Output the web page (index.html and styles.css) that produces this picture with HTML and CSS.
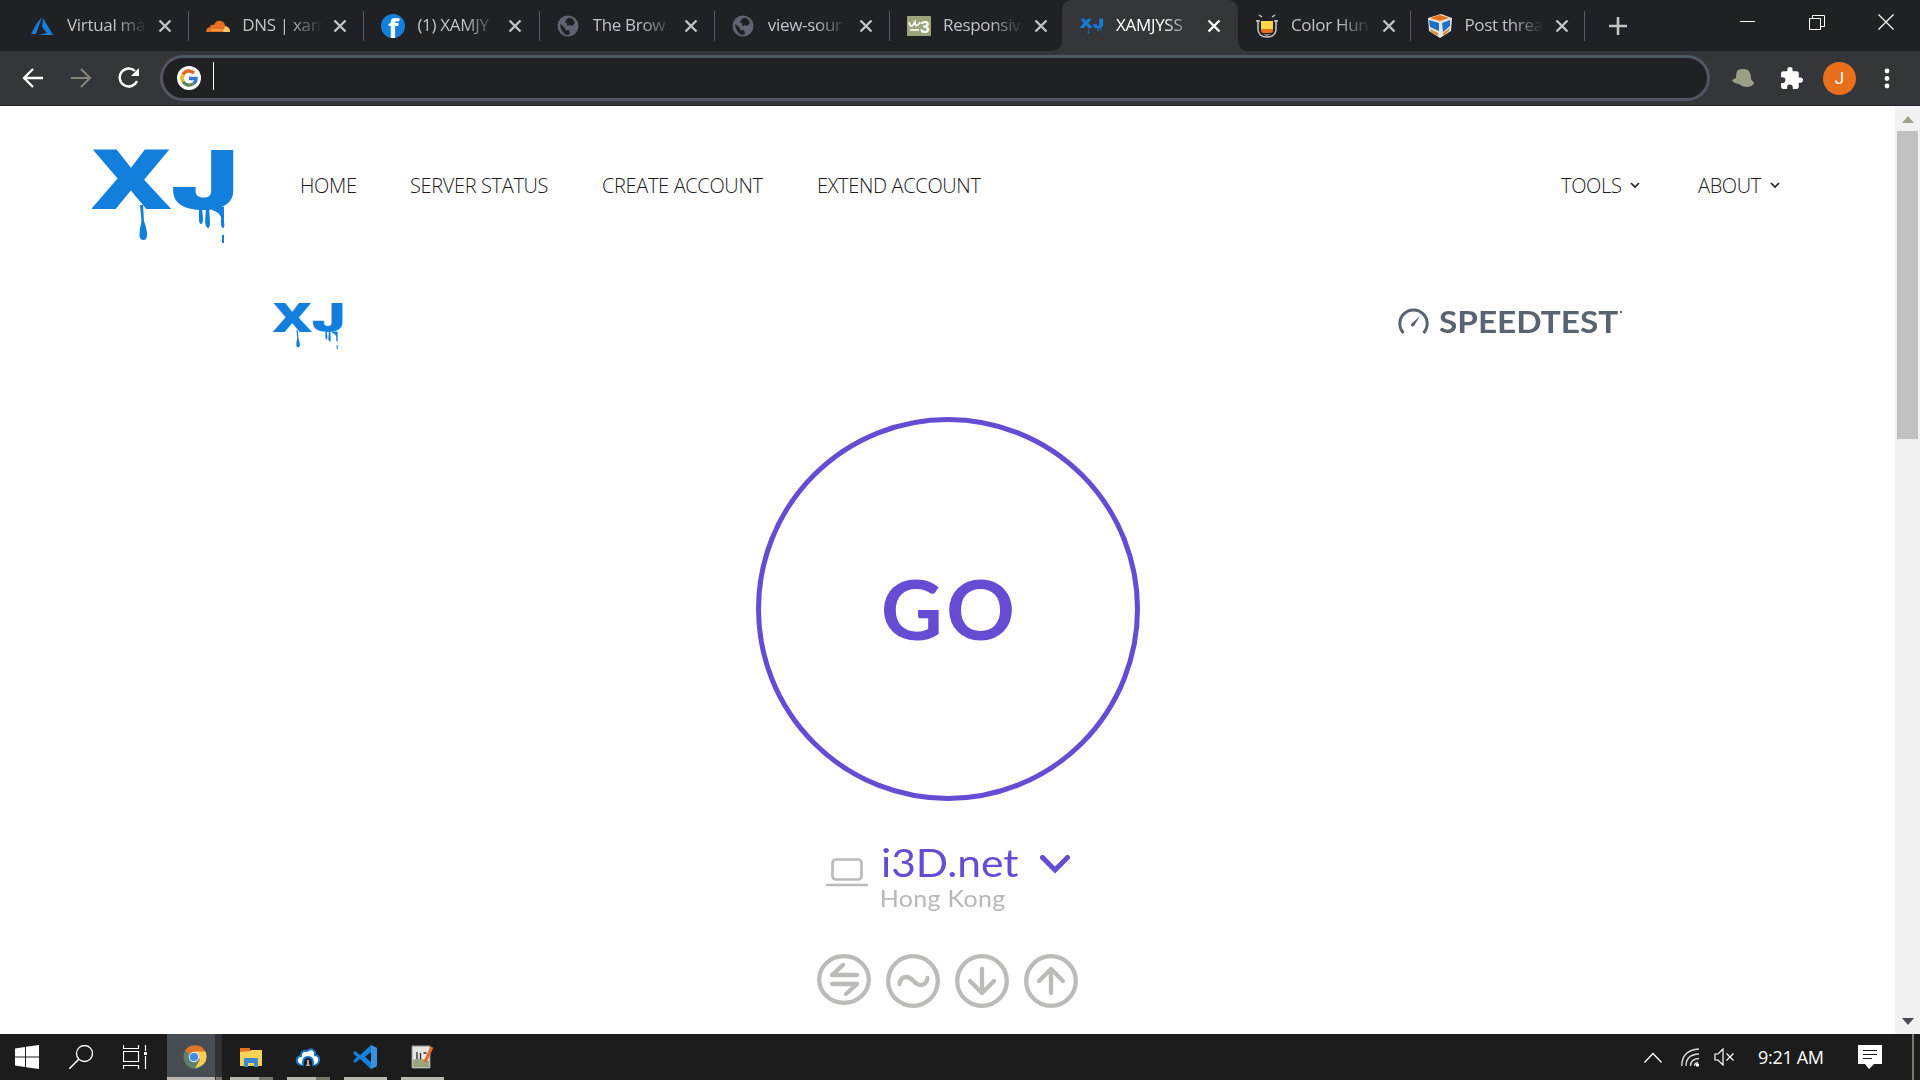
FILE: index.html
```html
<!DOCTYPE html>
<html lang="en">
<head>
    <meta charset="UTF-8">
    <title>XAMJYSSVPN</title>
    <link rel="stylesheet" href="styles.css">
</head>
<body>
    <svg class="defs" width="0" height="0">
        <symbol id="close" viewBox="0 0 14 14"><path d="M1.5 1.5l11 11M12.5 1.5l-11 11" stroke="currentColor" stroke-width="2.4"/></symbol>
        <symbol id="logo" viewBox="0 0 147 94">
            <text class="logo-letter" transform="translate(-1 59.500) scale(1.350 1)" font-size="82.500">X</text>
            <text class="logo-letter j" transform="translate(79 59.500) scale(1.400 1)" font-size="81">J</text>
            <g fill="#127fdd">
                <path d="M48 56h3l1 16q3 8 3 14 0 5-3.500 5-4 0-4-5 0-6 2-14z"/>
                <path d="M107 58h3l1 12q0 5-2 5t-2-5zM114 58h3l1 15q0 6-2 6t-3-6zM120 58h12v15q1 6-1 6t-2-6v-5q-2-5-9-7zM130 86h2v8h-2z"/>
            </g>
        </symbol>
        <symbol id="globe" viewBox="0 0 22 22"><circle cx="11" cy="11" r="10.500" fill="#5f6571"/><path d="M3 9q5 3 5 5t4 1l1 4-3 1Q4 18 3 9zM11 3q5-1 7 5l-3 3-2-1-3 1V8H8l1-3z" fill="#202124"/></symbol>
        <symbol id="down" viewBox="0 0 10 7"><path d="M1 1l4 4 4-4" fill="none" stroke="#222" stroke-width="1.700"/></symbol>
    </svg>

    <header class="tabs">
        <div class="tab">
            <svg class="favicon" viewBox="0 0 24 24"><path d="M11 3L6 9 0 20h5zM12 4l10 17H7l9-2-5-6z" fill="#1580dc"/></svg>
            <span class="title">Virtual ma</span><svg class="close"><use href="#close"/></svg>
        </div>
        <div class="tab">
            <svg class="favicon" viewBox="0 0 24 24"><path d="M0 18q0-4 4-5 0-3 4-2 2-5 7-4 4 1 4 5 5 1 5 6z" fill="#e86f21"/><path d="M17 18l2-6q5 1 5 6z" fill="#f9c66b"/><path d="M5 16h13" stroke="#f9c66b"/></svg>
            <span class="title">DNS | xam</span><svg class="close"><use href="#close"/></svg>
        </div>
        <div class="tab">
            <svg class="favicon" viewBox="0 0 24 24"><circle cx="12" cy="12" r="12" fill="#1580dc"/><text x="7" y="24" font-size="27" font-weight="bold" fill="#fff" font-family="Open Sans">f</text></svg>
            <span class="title">(1) XAMJY</span><svg class="close"><use href="#close"/></svg>
        </div>
        <div class="tab">
            <svg class="favicon small"><use href="#globe"/></svg>
            <span class="title">The Brow</span><svg class="close"><use href="#close"/></svg>
        </div>
        <div class="tab">
            <svg class="favicon small"><use href="#globe"/></svg>
            <span class="title">view-sour</span><svg class="close"><use href="#close"/></svg>
        </div>
        <div class="tab before-active">
            <svg class="favicon" viewBox="0 0 24 24"><rect y="2" width="24" height="20" rx="1" fill="#9ba57c"/><path d="M2 8q1 6 4 3l2-3q0 6 4 2l1-2M3 16h9" fill="none" stroke="#fff" stroke-width="1.600"/><text x="13" y="18.500" font-size="17" font-weight="bold" fill="#fff" font-family="Roboto">3</text></svg>
            <span class="title">Responsiv</span><svg class="close"><use href="#close"/></svg>
        </div>
        <div class="tab active">
            <svg class="favicon" viewBox="0 0 147 110"><use href="#logo" width="147" height="94" y="10"/></svg>
            <span class="title">XAMJYSS</span><svg class="close"><use href="#close"/></svg>
        </div>
        <div class="tab last">
            <svg class="favicon" viewBox="0 0 24 24"><path d="M3 6v10q1 7 9 7t9-7V6M4 1l3 2M20 1l-3 2M1 7h4M19 7h4" fill="none" stroke="#c9c9c9" stroke-width="1.500"/><path d="M6 7h12v8H6z" fill="#fdd545"/><path d="M6 15h12v3l-2 1H8l-2-1z" fill="#e8701d"/><path d="M8 20h8l-3 2h-2z" fill="#8b7e87"/></svg>
            <span class="title">Color Hun</span><svg class="close"><use href="#close"/></svg>
        </div>
        <div class="tab last">
            <svg class="favicon" viewBox="0 0 24 24"><path d="M0 4l13-4 11 4-1 13-11 7L1 17z" fill="#e4e4dd"/><path d="M2 4l10-3 9 3-9 3z" fill="#e8701d"/><path d="M1 6l10 3v8L2 13zM14 9l8-3v6l-7 6z" fill="#1b73c8"/><path d="M2 15l8 4v3l-7-4zM15 19l7-5-1 3-6 5z" fill="#d78b45"/></svg>
            <span class="title">Post threa</span><svg class="close"><use href="#close"/></svg>
        </div>
        <svg class="new-tab" viewBox="0 0 18 18"><path d="M9 0v18M0 9h18" stroke="#c4c4c4" stroke-width="2.600"/></svg>
        <div class="window-buttons">
            <svg viewBox="0 0 16 16"><path d="M0 7.500h15" stroke="#fff"/></svg>
            <svg viewBox="0 0 16 16"><path d="M.5 4.500h11v11H.5zM3.500 4V1.500h12v11H12" fill="none" stroke="#fff"/></svg>
            <svg viewBox="0 0 16 16"><path d="M.5 .5l15 15M15.500 .5l-15 15" stroke="#fff" stroke-width="1.200"/></svg>
        </div>
    </header>

    <div class="toolbar">
        <svg class="tool" viewBox="0 0 22 22"><path d="M21 11H2M11 2l-9 9 9 9" fill="none" stroke="#fff" stroke-width="2.300"/></svg>
        <svg class="tool" viewBox="0 0 22 22"><path d="M1 11h19M11 2l9 9-9 9" fill="none" stroke="#86857c" stroke-width="2"/></svg>
        <svg class="tool" viewBox="0 0 22 22"><path d="M19 14a9 9 0 1 1-2-10" fill="none" stroke="#fff" stroke-width="2.400"/><path d="M21 1v8h-8z" fill="#fff"/></svg>
        <div class="omnibox">
            <svg class="google" viewBox="0 0 24 24">
                <circle cx="12" cy="12" r="12" fill="#fff"/>
                <g fill="none" stroke-width="3.500">
                    <path d="M17 7A7 7 0 0 0 6 8.500" stroke="#e36524"/>
                    <path d="M6 8.500a7 7 0 0 0 0 7" stroke="#f0b929"/>
                    <path d="M6 15.500a7 7 0 0 0 10.500 2" stroke="#5f8755"/>
                    <path d="M12 12.500h7q0 3.500-2.500 5" stroke="#3478cc"/>
                </g>
            </svg>
            <span class="cursor"></span>
        </div>
        <div class="extensions">
            <svg width="22" height="18" viewBox="0 0 22 18"><path d="M4 9Q4 3 6 1q5-2 10 0 3 3 3 9l3 4q-1 4-8 4-4 0-7-3-6-1-7-4z" fill="#9b9f85"/></svg>
            <svg width="25" height="25" viewBox="0 0 24 24"><path d="M20.500 11H19V7c0-1.100-.9-2-2-2h-4V3.500a2.500 2.500 0 0 0-5 0V5H4c-1.100 0-2 .9-2 2v3.800h1.500a2.700 2.700 0 0 1 0 5.400H2V20c0 1.100.9 2 2 2h3.800v-1.500a2.700 2.700 0 0 1 5.400 0V22H17c1.100 0 2-.9 2-2v-4h1.500a2.500 2.500 0 0 0 0-5z" fill="#fff"/></svg>
            <span class="avatar">J</span>
            <svg width="6" height="21" viewBox="0 0 6 21"><g fill="#fff"><circle cx="3" cy="3" r="2.400"/><circle cx="3" cy="10.500" r="2.400"/><circle cx="3" cy="18" r="2.400"/></g></svg>
        </div>
    </div>

    <div class="viewport">
        <main>
            <nav>
                <svg class="logo"><use href="#logo"/></svg>
                <a class="home">HOME</a>
                <a class="status">SERVER STATUS</a>
                <a class="create">CREATE ACCOUNT</a>
                <a class="extend">EXTEND ACCOUNT</a>
                <a class="tools">TOOLS</a><svg class="arrow"><use href="#down"/></svg>
                <a class="about">ABOUT</a><svg class="arrow"><use href="#down"/></svg>
            </nav>
            <div class="brands">
                <svg class="brand-logo"><use href="#logo"/></svg>
                <div class="speedtest">
                    <svg width="31" height="27" viewBox="0 0 31 27"><path d="M5.500 25a13.700 13.700 0 1 1 20 0" fill="none" stroke="#5a6370" stroke-width="3"/><path d="M13 16l9-8-6 10q-3 2-3-2z" fill="#5a6370"/></svg>
                    <span class="word">SPEEDTEST</span><i></i>
                </div>
            </div>
            <div class="go"><span>GO</span></div>
            <div class="server">
                <svg class="laptop" viewBox="0 0 42 29"><rect x="6.500" y="1.500" width="29" height="20" rx="3.500" fill="none" stroke="#bbb" stroke-width="2.700"/><path d="M0 27h42" stroke="#bbb" stroke-width="2.500"/></svg>
                <div class="host">
                    <div class="name"><span>i3D.net</span><svg width="30" height="19" viewBox="0 0 30 19"><path d="M2.500 2.500L15 15 27.500 2.500" fill="none" stroke="#654cd2" stroke-width="5" stroke-linecap="round"/></svg></div>
                    <div class="city">Hong Kong</div>
                </div>
            </div>
            <div class="modes">
                <svg viewBox="0 0 54 54"><ellipse cx="27" cy="25.500" rx="24.800" ry="23.300"/><path d="M40 21H15l11-10M15 30h25L29 40"/></svg>
                <svg viewBox="0 0 54 54"><circle cx="27" cy="27" r="24.800"/><path d="M13.500 30q1-7 7-7 3 0 7 4t7 4q6 0 7-7"/></svg>
                <svg viewBox="0 0 54 54"><circle cx="27" cy="27" r="24.800"/><path d="M27 15v24M15 27l12 12 12-12"/></svg>
                <svg viewBox="0 0 54 54"><circle cx="27" cy="27" r="24.800"/><path d="M27 39V15M15 27l12-12 12 12"/></svg>
            </div>
        </main>
        <div class="scrollbar">
            <svg width="12" height="7" viewBox="0 0 12 7"><path d="M0 7l6-7 6 7z" fill="#a1a38a"/></svg>
            <div class="thumb"></div>
            <svg class="bottom" width="12" height="7" viewBox="0 0 12 7"><path d="M0 0h12L6 7z" fill="#494d52"/></svg>
        </div>
    </div>

    <footer class="taskbar">
        <div class="task start"><svg viewBox="0 0 24 24"><path d="M0 3.500l10-1.500v9.500H0zM11 1.800L24 0v11.500H11zM0 12.500h10V22L0 20.500zM11 12.500h13V24l-13-1.800z" fill="#fff"/></svg></div>
        <div class="task search"><svg viewBox="0 0 24 24"><circle cx="15.500" cy="8.500" r="8" fill="none" stroke="#fff" stroke-width="1.300"/><path d="M10 14L0 24" stroke="#fff" stroke-width="1.500"/></svg></div>
        <div class="task view"><svg viewBox="0 0 24 24"><path d="M.5 0v3.500h15V0M.5 24v-3.500h15V24M.5 6.500h15v10H.5zM22.500 0v6M22.500 11v13" fill="none" stroke="#fff" stroke-width="1.200"/><path d="M21 7h3v3h-3z" fill="#fff"/></svg></div>
        <div class="task chrome">
            <svg viewBox="0 0 24 24"><circle cx="12" cy="12" r="11.500" fill="#60806d"/><path d="M12 12L2 6Q5 0 12 .5 19 0 22 6z" fill="#e47428"/><path d="M12 6.500h10.500Q27 19 12 23.500l5-9z" fill="#ffd04d"/><circle cx="11" cy="12" r="5.300" fill="#d7e2ee"/><circle cx="11" cy="12" r="4.100" fill="#4389e6"/></svg>
            <span class="line"></span><span class="line more"></span>
        </div>
        <div class="task app">
            <svg viewBox="0 0 24 24"><path d="M1 3h10v4H1z" fill="#e8701d"/><path d="M1 7l10-1 1-1h11v16H1z" fill="#fdd153"/><path d="M5 22v-8q0-1 1-1h12q1 0 1 1v8h-4v-4H9v4z" fill="#3b88d4"/></svg>
            <span class="line"></span><span class="line more"></span>
        </div>
        <div class="task app">
            <svg viewBox="0 0 24 24"><path d="M5 20q-5-1-4-6 1-3 4-3 0-6 6-5 5-4 8 1 0 2 0 3 5 1 4 6-1 4-4 4" fill="#fff" stroke="#1673c7" stroke-width="2"/><path d="M7 21q-1-9 5-9t5 9" fill="#1c1c1c" stroke="#1673c7" stroke-width="2"/><path d="M9.500 21l1.500-2v-4h2v4l1.500 2z" fill="#aaa"/></svg>
            <span class="line"></span><span class="line more"></span>
        </div>
        <div class="task app">
            <svg viewBox="0 0 24 24"><path d="M18 0l6 3v18l-6 3L7 14l-5 4-2-2 4-4-4-4 2-2 5 4zm0 7l-6 5 6 5z" fill="#1580d8"/><path d="M18 0l6 3v18l-6 3z" fill="#3b91df"/></svg>
            <span class="line full"></span>
        </div>
        <div class="task app">
            <svg viewBox="0 0 24 24"><path d="M2 1h18v22H2z" fill="#e5e6e1" stroke="#8a949b"/><path d="M3 15q7-3 16 1v6H3z" fill="#9ba57c"/><path d="M7 14V7M10.500 14V8M13.500 8h3" fill="none" stroke="#333" stroke-width="1.400"/><path d="M15 17l7-15" stroke="#e46c24" stroke-width="3"/></svg>
            <span class="line full"></span>
        </div>
        <div class="tray">
            <svg class="caret" viewBox="0 0 18 11"><path d="M.5 10.500L9 1.500l8.500 9" fill="none" stroke="#fff" stroke-width="1.300"/></svg>
            <svg class="wifi" viewBox="0 0 19 19"><path d="M.7 18Q1 2 18 1M5 18Q5 6.500 18 6M9.500 18q0-7 8.500-7.500" fill="none" stroke="#ddd" stroke-width="1.300"/><path d="M13.500 18q0-3 3.500-3.500" fill="none" stroke="#ddd" stroke-width="1.300"/><circle cx="16.500" cy="17" r="1.700" fill="#fff"/></svg>
            <svg class="speaker" viewBox="0 0 21 18"><path d="M1 6h3l5-5v16l-5-5H1zM12.500 5.500l7 7M19.500 5.500l-7 7" fill="none" stroke="#fff" stroke-width="1.200"/></svg>
            <span class="clock">9:21 AM</span>
            <svg class="notes" viewBox="0 0 24 24"><path d="M0 0h24v19h-8l-5 5-4-5H0z" fill="#fff"/><path d="M5 5.500h14M5 9.500h14M5 13.500h9" stroke="#1c1c1c" stroke-width="1.200"/></svg>
            <span class="desktop"></span>
        </div>
    </footer>
</body>
</html>
```
FILE: styles.css
```css
* {
    box-sizing: border-box;
}

body {
    margin: 0;
    width: 1920px;
    height: 1080px;
    overflow: hidden;
    display: flex;
    flex-direction: column;
    background: #fefefe;
    font-family: "Open Sans", "Noto Sans", sans-serif;
}

svg {
    display: block;
    flex: none;
}

.defs {
    position: absolute;
}

.logo-letter {
    font-family: "Open Sans", sans-serif;
    font-weight: 800;
    fill: #127fdd;
}

.logo-letter.j {
    font-family: Inter, sans-serif;
    font-weight: 900;
}

/* browser tabs */
.tabs {
    height: 51px;
    flex: none;
    display: flex;
    align-items: center;
    padding-left: 14px;
    background: #202124;
    color: #c0c3c7;
}

.tab {
    width: 175.200px;
    height: 30px;
    flex: none;
    display: flex;
    align-items: center;
    padding-left: 17px;
    border-right: 1px solid #595c62;
}

.favicon {
    width: 24px;
    height: 24px;
    margin-right: 12px;
}

.favicon.small {
    width: 22px;
    height: 22px;
    margin-right: 14px;
}

.title {
    width: 80px;
    height: 28px;
    white-space: nowrap;
    font-size: 17px;
    line-height: 26px;
    letter-spacing: -0.3px;
    -webkit-mask-image: linear-gradient(90deg, #000 60%, transparent);
    mask-image: linear-gradient(90deg, #000 60%, transparent);
}

.close {
    width: 14px;
    height: 14px;
    margin-left: 11px;
}

.tab.before-active {
    width: 172px;
    border-color: transparent;
}

.tab.last {
    width: 173.500px;
}

.tab.active {
    position: relative;
    height: 51px;
    width: 176px;
    padding-left: 18px;
    border: 0;
    border-radius: 10px 10px 0 0;
    background: #35363a;
    color: #fff;
}

.tab.active::before,
.tab.active::after {
    content: "";
    position: absolute;
    bottom: 0;
    left: -10px;
    width: 10px;
    height: 10px;
    background: radial-gradient(circle at 0 0, transparent 10px, #35363a 10px);
}

.tab.active::after {
    left: auto;
    right: -10px;
    background: radial-gradient(circle at 100% 0, transparent 10px, #35363a 10px);
}

.new-tab {
    width: 18px;
    height: 18px;
    margin-left: 24px;
}

.window-buttons {
    display: flex;
    gap: 53px;
    margin: 0 26px 8px auto;
}

.window-buttons svg {
    width: 16px;
    height: 16px;
}

/* address bar */
.toolbar {
    height: 55px;
    flex: none;
    display: flex;
    align-items: center;
    padding: 0 30px 0 22px;
    background: #35363a;
    border-bottom: 1px solid #25262a;
}

.tool {
    width: 22px;
    height: 22px;
    margin-right: 26px;
}

.tool:nth-child(3) {
    margin-right: 20px;
}

.omnibox {
    width: 1550px;
    height: 46px;
    display: flex;
    align-items: center;
    border: 3px solid #505763;
    border-radius: 23px;
    background: #202124;
    padding-left: 14px;
}

.google {
    width: 24px;
    height: 24px;
}

.cursor {
    width: 1px;
    height: 28px;
    margin: -4px 0 0 12px;
    background: #fff;
}

.extensions {
    flex: 1;
    display: flex;
    align-items: center;
    justify-content: space-between;
    padding-left: 22px;
}

.avatar {
    width: 33px;
    height: 33px;
    margin: 0 3px 0 -6px;
    border-radius: 50%;
    background: #e8701d;
    color: #fff;
    font: 17px/33px Roboto, sans-serif;
    text-align: center;
}

/* page */
.viewport {
    height: 928px;
    display: flex;
}

main {
    width: 1895px;
    display: flex;
    flex-direction: column;
    align-items: center;
}

nav {
    width: 100%;
    height: 180px;
    display: flex;
    align-items: flex-start;
    padding: 43px 0 0 92px;
    color: #1b1b1b;
    font-size: 20px;
    font-weight: 300;
    line-height: 73px;
    white-space: nowrap;
}

nav a {
    letter-spacing: -0.35px;
}

.logo {
    width: 147px;
    height: 94px;
}

.home {
    width: 110px;
    margin-left: 61px;
}

.status {
    width: 192px;
}

.create {
    width: 215px;
}

.extend {
    width: 744px;
}

.tools {
    width: 69px;
}

.about {
    width: 72px;
    margin-left: 58px;
}

.arrow {
    width: 10px;
    height: 7px;
    margin-top: 33px;
}

.brands {
    width: 1350px;
    height: 131px;
    display: flex;
    justify-content: space-between;
    padding-top: 16px;
}

.brand-logo {
    width: 72px;
    height: 48px;
}

.speedtest {
    width: 225px;
    height: 27px;
    margin-top: 6px;
    display: flex;
    align-items: center;
    color: #5a6370;
}

.word {
    width: 180px;
    margin-left: 10px;
    font: bold 29.500px/30px Lato, sans-serif;
    transform: scaleX(1.130);
    transform-origin: left;
}

.speedtest i {
    width: 2px;
    height: 2px;
    margin: -20px 0 0 1px;
    background: #5a6370;
}

.go {
    width: 384px;
    height: 384px;
    border: 5px solid #654cd2;
    border-radius: 50%;
    color: #654cd2;
    font: bold 83px/372px Lato, sans-serif;
    text-align: center;
}

.go span {
    display: block;
    letter-spacing: 3px;
    text-indent: 3px;
    transform: scaleX(1.030);
}

.server {
    width: 243px;
    display: flex;
    padding-top: 38px;
}

.laptop {
    width: 42px;
    height: 29px;
    margin: 19px 13px 0 0;
}

.name {
    height: 46px;
    display: flex;
    align-items: center;
    color: #654cd2;
    font: 39px/47px Lato, sans-serif;
}

.name span {
    width: 159px;
    padding-top: 1px;
    transform: scaleX(1.090);
    transform-origin: left;
}

.name svg {
    margin-top: 4px;
}

.city {
    height: 27px;
    color: #b7b7bd;
    font: 22.500px/27px Lato, sans-serif;
    letter-spacing: 0.3px;
    transform: scaleX(1.110);
    transform-origin: 2px 0;
    margin-left: -1px;
}

.modes {
    display: flex;
    gap: 15px;
    padding-top: 42px;
}

.modes svg {
    width: 54px;
    height: 54px;
    fill: none;
    stroke: #bbbbba;
    stroke-width: 4.300px;
    stroke-linecap: round;
    stroke-linejoin: round;
}

.scrollbar {
    width: 25px;
    display: flex;
    flex-direction: column;
    align-items: center;
    padding: 10px 0 9px;
    background: #f1f1f1;
}

.thumb {
    width: 21px;
    height: 308px;
    margin-top: 8px;
    background: #c1c1c1;
}

.bottom {
    margin-top: auto;
}

/* taskbar */
.taskbar {
    height: 46px;
    flex: none;
    display: flex;
    background: #1c1c1c;
    color: #fff;
}

.task {
    position: relative;
    width: 43px;
    margin-right: 14px;
    display: flex;
    justify-content: center;
    padding-top: 11px;
}

.task svg {
    width: 24px;
    height: 24px;
}

.start {
    width: 54px;
    margin: 0;
}

.search {
    width: 54px;
    margin: 0;
}

.view {
    width: 54px;
    margin: 0 5px 0 0;
}

.chrome {
    width: 55px;
    margin-right: 8px;
    background: linear-gradient(90deg, #484c53 48px, #303238 48px);
}

.app {
    padding-right: 2px;
}

.line {
    position: absolute;
    left: 0;
    bottom: 0;
    width: 29px;
    height: 3px;
    background: #b8b8b0;
}

.line.full {
    width: 43px;
}

.line.more {
    left: 29px;
    width: 14px;
    background: #76766a;
}

.chrome .line {
    width: 48px;
}

.chrome .line.more {
    left: 49px;
    width: 6px;
}

.tray {
    display: flex;
    align-items: center;
    margin-left: auto;
}

.caret {
    width: 18px;
    height: 11px;
    margin-right: 19px;
}

.wifi {
    width: 19px;
    height: 19px;
    margin-right: 14px;
}

.speaker {
    width: 21px;
    height: 18px;
}

.clock {
    width: 100px;
    margin-left: 23px;
    font-size: 18px;
    letter-spacing: -0.3px;
}

.notes {
    width: 24px;
    height: 24px;
}

.desktop {
    width: 8px;
    height: 46px;
    margin-left: 30px;
    border-left: 2px solid #76766c;
}
```
